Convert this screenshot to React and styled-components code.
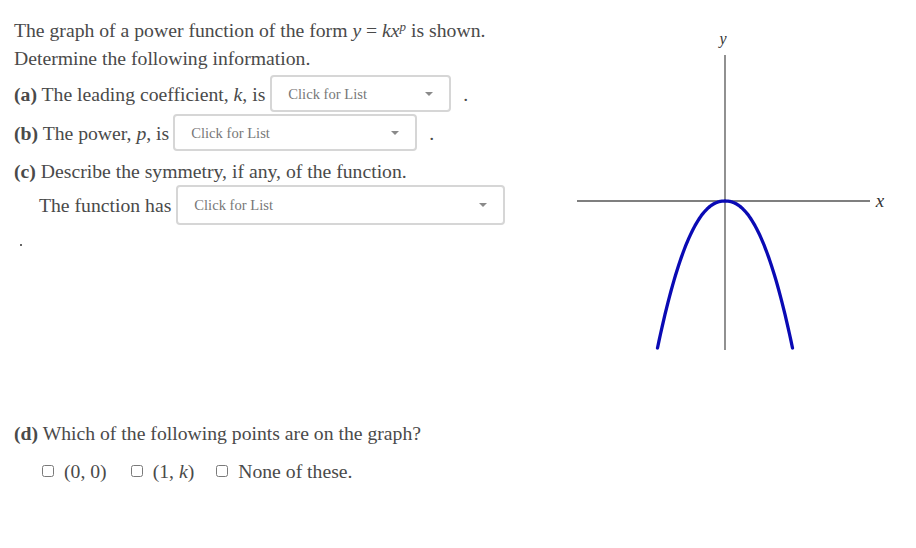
import React from "react";
import styled, { createGlobalStyle } from "styled-components";

const GlobalStyle = createGlobalStyle`
  html, body { margin: 0; padding: 0; background: #fff; }
  body { font-family: "Liberation Serif", "Times New Roman", serif; color: #4a4a4a; }
`;

const Page = styled.div`
  display: flex;
  width: 916px;
  height: 548px;
  box-sizing: border-box;
`;

const Left = styled.div`
  width: 570px;
  padding: 16px 0 0 14px;
  box-sizing: border-box;
  font-size: 19.7px;
`;

const Line = styled.div`
  line-height: 28px;
  white-space: nowrap;
`;

const Row = styled.div`
  display: flex;
  align-items: center;
  white-space: pre;
  margin-top: ${(p) => p.$mt || 0}px;
  padding-left: ${(p) => p.$indent || 0}px;
  line-height: 28px;
`;

const Label = styled.b`
  font-weight: bold;
`;

const Var = styled.i`
  font-style: italic;
`;

const Sup = styled.sup`
  font-size: 13px;
  font-style: italic;
  vertical-align: 6px;
  line-height: 0;
`;

const Select = styled.div`
  display: flex;
  align-items: center;
  justify-content: space-between;
  box-sizing: border-box;
  width: ${(p) => p.$w}px;
  height: ${(p) => p.$h || 37}px;
  margin-left: ${(p) => p.$ml || 4}px;
  padding: 0 16px 0 16px;
  border: 2px solid #d6d6d6;
  border-radius: 4px;
  font-size: 14.6px;
  color: #777;
  background: #fff;
`;

const Caret = styled.span`
  width: 0;
  height: 0;
  border-left: 4px solid transparent;
  border-right: 4px solid transparent;
  border-top: 4px solid #8a8a8a;
`;

const Period = styled.span`
  margin-left: 12px;
`;

const Dot = styled.div`
  width: 2px;
  height: 2px;
  background: #666;
  margin: 19px 0 0 6px;
`;

const Options = styled.div`
  display: flex;
  align-items: center;
  padding-left: 28px;
  margin-top: 10px;
  line-height: 28px;
`;

const Option = styled.label`
  display: flex;
  align-items: center;
  margin-right: ${(p) => p.$mr || 0}px;
`;

const Box = styled.span`
  box-sizing: border-box;
  flex: 0 0 12px;
  width: 12px;
  height: 12px;
  border: 1.6px solid #7a7a7a;
  border-radius: 2.5px;
  display: inline-block;
  margin-right: 10px;
`;

const Graph = styled.svg`
  display: block;
  margin-top: 20px;
`;

const curve = (() => {
  const pts = [];
  for (let dx = -67.5; dx <= 67.51; dx += 1.5) {
    const t = Math.abs(dx) / 67.5;
    const dy = 147 * Math.pow(t, 2.2);
    pts.push(`${(725 + dx - 570).toFixed(2)},${(201 + dy - 20).toFixed(2)}`);
  }
  return pts.join(" ");
})();

export default function App() {
  return (
    <>
      <GlobalStyle />
      <Page>
        <Left>
          <Line>
            The graph of a power function of the form <Var>y</Var> = <Var>kx</Var>
            <Sup>p</Sup> is shown.
          </Line>
          <Line>Determine the following information.</Line>
          <Row $mt={3}>
            <span>
              <Label>(a)</Label> The leading coefficient, <Var>k</Var>, is
            </span>
            <Select $w={181} $ml={5}>
              Click for List <Caret />
            </Select>
            <Period>.</Period>
          </Row>
          <Row $mt={2}>
            <span>
              <Label>(b)</Label> The power, <Var>p</Var>, is
            </span>
            <Select $w={244} $ml={4}>
              Click for List <Caret />
            </Select>
            <Period>.</Period>
          </Row>
          <Row $mt={6}>
            <span>
              <Label>(c)</Label> Describe the symmetry, if any, of the function.
            </span>
          </Row>
          <Row $indent={25} $mt={0}>
            <span>The function has</span>
            <Select $w={329} $h={40} $ml={5}>
              Click for List <Caret />
            </Select>
          </Row>
          <Dot />
          <Row $mt={173}>
            <span>
              <Label>(d)</Label> Which of the following points are on the graph?
            </span>
          </Row>
          <Options>
            <Option $mr={24}>
              <Box />
              <span>(0, 0)</span>
            </Option>
            <Option $mr={22}>
              <Box />
              <span>
                (1, <Var>k</Var>)
              </span>
            </Option>
            <Option>
              <Box />
              <span>None of these.</span>
            </Option>
          </Options>
        </Left>
        <Graph width="330" height="340" viewBox="0 0 330 340">
          <line x1="155" y1="35" x2="155" y2="330" stroke="#555" strokeWidth="1.3" />
          <line x1="7" y1="181" x2="300" y2="181" stroke="#555" strokeWidth="1.3" />
          <text x="153" y="24" fontFamily="Liberation Serif" fontStyle="italic" fontSize="16" fill="#333" textAnchor="middle">y</text>
          <text x="310" y="187" fontFamily="Liberation Serif" fontStyle="italic" fontSize="19" fill="#333" textAnchor="middle">x</text>
          <polyline points={curve} fill="none" stroke="#0a0ab4" strokeWidth="3.3" strokeLinecap="round" strokeLinejoin="round" />
        </Graph>
      </Page>
    </>
  );
}
